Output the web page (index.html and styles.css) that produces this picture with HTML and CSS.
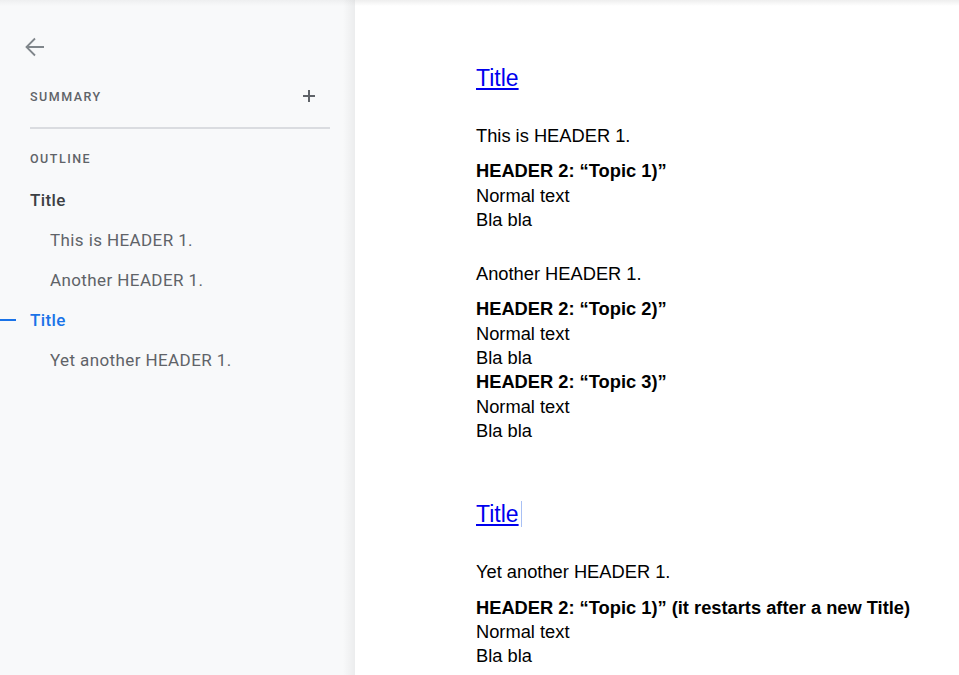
FILE: index.html
```html
<!DOCTYPE html>
<html lang="en">
    <head>
        <meta charset="utf-8" />
        <title>Document outline</title>
        <link rel="stylesheet" href="styles.css">
    </head>

    <body>
        <div class="sidebar">
            <div class="back">
                <svg width="22" height="22" viewBox="0 0 22 22">
                    <path d="M20 11H2.5M11 2.5L2.5 11L11 19.5" fill="none" stroke="#80868b" stroke-width="1.8"/>
                </svg>
            </div>
            <div class="section-row">
                <span class="section-label">Summary</span>
                <svg class="plus" width="14" height="14" viewBox="0 0 14 14">
                    <path d="M7 1V13M1 7H13" stroke="#5f6368" stroke-width="2"/>
                </svg>
            </div>
            <div class="divider"></div>
            <div class="section-row outline-row">
                <span class="section-label">Outline</span>
            </div>
            <ul class="outline">
                <li class="level-title">Title</li>
                <li class="level-one">This is HEADER 1.</li>
                <li class="level-one">Another HEADER 1.</li>
                <li class="level-title active">Title</li>
                <li class="level-one">Yet another HEADER 1.</li>
            </ul>
        </div>

        <div class="page">
            <div class="doc">
                <a class="doc-title first" href="#">Title</a>
                <p class="h1">This is HEADER 1.</p>
                <p class="h2">HEADER 2: “Topic 1)”</p>
                <p class="line">Normal text</p>
                <p class="line">Bla bla</p>

                <p class="h1 spaced">Another HEADER 1.</p>
                <p class="h2">HEADER 2: “Topic 2)”</p>
                <p class="line">Normal text</p>
                <p class="line">Bla bla</p>
                <p class="h2 tight">HEADER 2: “Topic 3)”</p>
                <p class="line">Normal text</p>
                <p class="line">Bla bla</p>

                <div class="doc-title-row"><a class="doc-title" href="#">Title</a><span class="caret"></span></div>
                <p class="h1">Yet another HEADER 1.</p>
                <p class="h2">HEADER 2: “Topic 1)” (it restarts after a new Title)</p>
                <p class="line">Normal text</p>
                <p class="line">Bla bla</p>
            </div>
        </div>
    </body>
</html>
```

FILE: styles.css
```css
html, body {
    margin: 0;
    padding: 0;
    width: 100vw;
    height: 100vh;
    overflow: hidden;
}
body {
    display: flex;
    background: #fff;
}
.sidebar {
    width: 355px;
    flex-shrink: 0;
    box-sizing: border-box;
    padding: 35px 25px 0 30px;
    background: linear-gradient(to right, rgba(0,0,0,0) 343px, rgba(0,0,0,0.05) 355px),
                linear-gradient(#eeeff0, #f8f9fa 6px);
    font-family: Roboto, "Noto Sans", sans-serif;
}
.back {
    height: 24px;
    margin-left: -6px;
    display: flex;
    align-items: center;
}
.section-row {
    display: flex;
    align-items: center;
    justify-content: space-between;
    height: 24px;
    margin-top: 25px;
    padding-right: 14px;
}
.section-label {
    font-size: 12.5px;
    font-weight: 500;
    letter-spacing: 1.5px;
    text-transform: uppercase;
    color: #5f6368;
}
.divider {
    height: 2px;
    margin-top: 19px;
    background: #dadce0;
}
.outline-row {
    margin-top: 17px;
}
.outline {
    list-style: none;
    margin: 10px 0 0;
    padding: 0;
}
.outline li {
    height: 40px;
    line-height: 40px;
    font-size: 17px;
    letter-spacing: 0.4px;
    position: relative;
}
.level-title {
    color: #3c4043;
    font-weight: 500;
}
.level-one {
    padding-left: 20px;
    color: #5f6368;
}
.outline li.active {
    color: #1a73e8;
}
.outline li.active::before {
    content: "";
    position: absolute;
    left: -30px;
    top: 19px;
    width: 16px;
    height: 2px;
    background: #1a73e8;
}
.page {
    flex: 1;
    background: linear-gradient(#eeeeee, #fff 6px);
    font-family: "Liberation Sans", Arial, sans-serif;
    color: #000;
}
.doc {
    padding: 63px 0 0 121px;
}
.doc p {
    margin: 0;
    font-size: 18.3px;
    line-height: 24.3px;
}
.doc-title {
    display: inline-block;
    font-size: 23px;
    line-height: 30px;
    color: #0000ee;
}
.doc-title.first {
    display: block;
    width: fit-content;
}
.doc-title-row {
    display: flex;
    align-items: center;
    margin-top: 56px;
    height: 30px;
}
.caret {
    width: 1px;
    height: 26px;
    margin-left: 2px;
    background: #a8c0f4;
}
.doc p.h1 {
    margin-top: 31px;
}
.doc p.h1.spaced {
    margin-top: 30px;
}
.doc p.h2 {
    font-weight: bold;
    margin-top: 11px;
}
.doc p.h2.tight {
    margin-top: 0;
}
```
